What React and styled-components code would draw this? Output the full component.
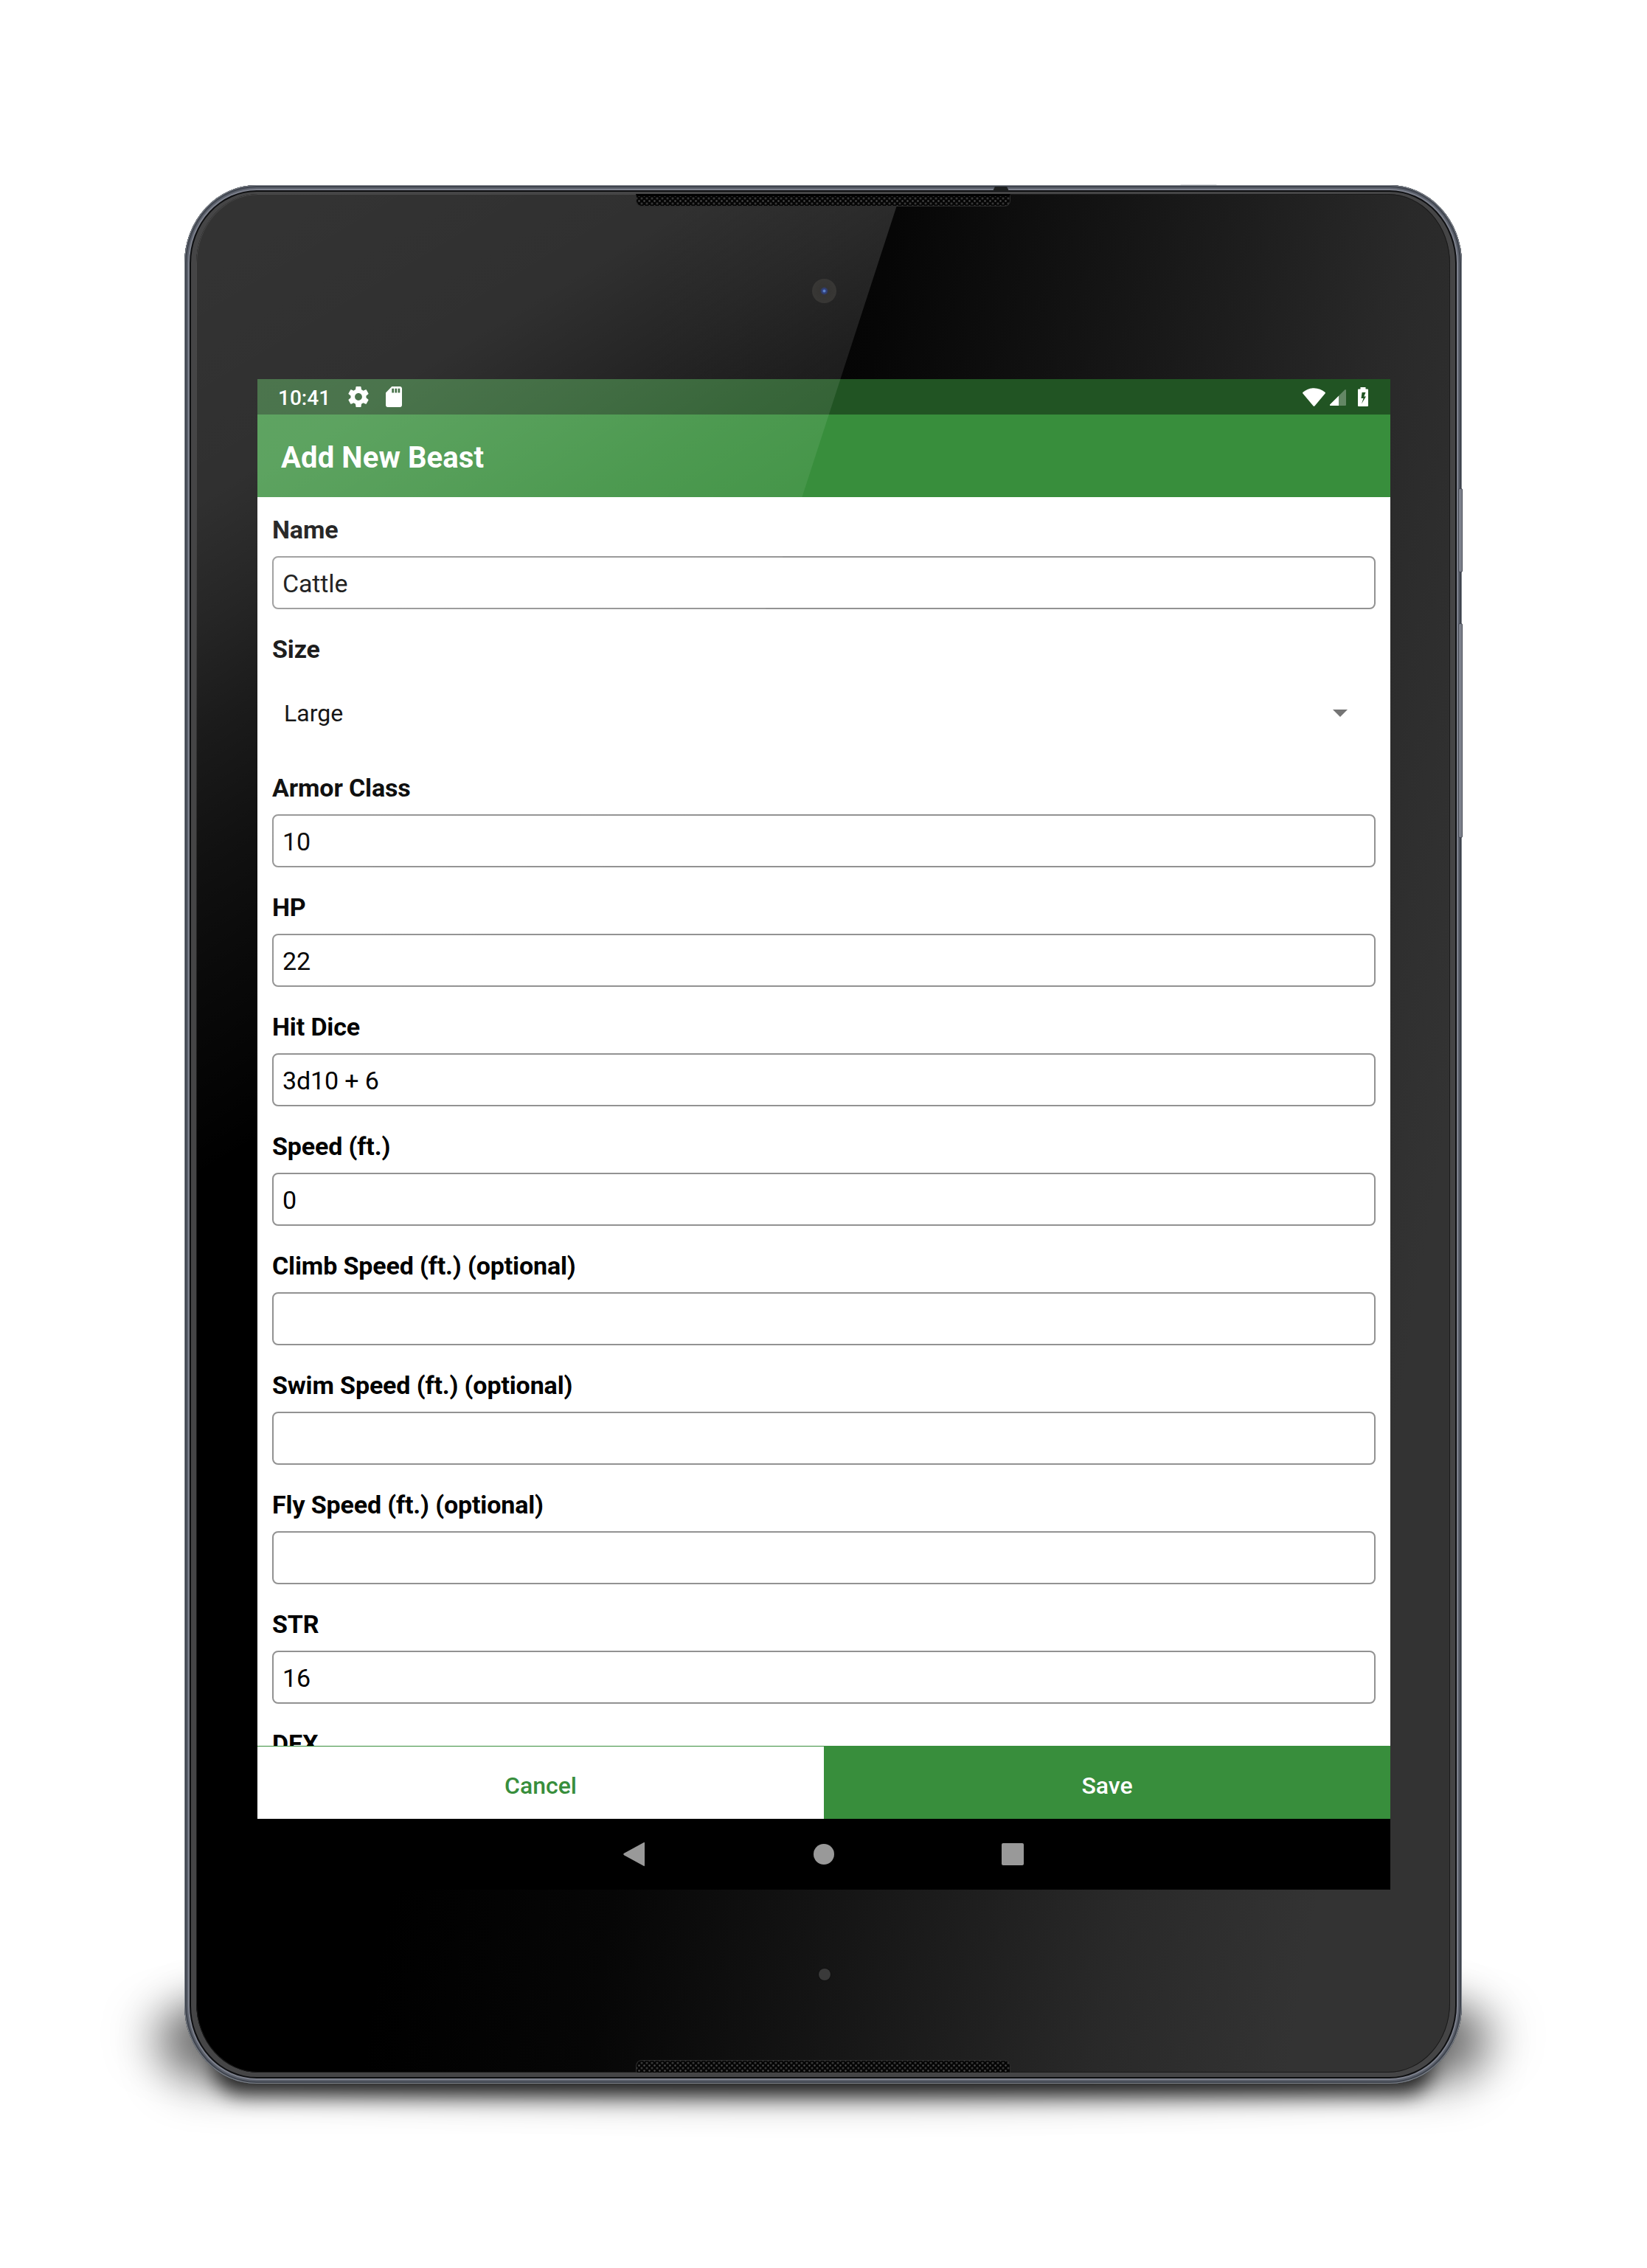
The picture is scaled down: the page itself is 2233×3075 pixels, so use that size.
import React from 'react';
import styled, { createGlobalStyle, css } from 'styled-components';

const GREEN = '#388e3c';

const GlobalStyle = createGlobalStyle`
  * { box-sizing: border-box; }
  body { margin: 0; background: #fff; font-family: Roboto, "Noto Sans", sans-serif; }
`;

const Page = styled.main`
  width: 2233px;
  height: 3075px;
  padding: 251px 250px 250px;
  overflow: hidden;
  background: #fff;
`;

const Device = styled.div`
  position: relative;
  width: 1732px;
  height: 2574px;
`;

const WideShadow = styled.div`
  position: absolute;
  left: -50px;
  right: -50px;
  top: 2445px;
  height: 125px;
  border-radius: 50%;
  background: rgba(0, 0, 0, 0.5);
  filter: blur(34px);
`;

const SideShadow = styled.div`
  position: absolute;
  left: -28px;
  right: -28px;
  top: 2465px;
  height: 110px;
  border-radius: 90px 90px 70px 70px;
  background: rgba(0, 0, 0, 0.42);
  filter: blur(30px);
`;

const ContactShadow = styled.div`
  position: absolute;
  left: 40px;
  right: 40px;
  top: 2512px;
  height: 77px;
  border-radius: 60px;
  background: rgba(0, 0, 0, 0.8);
  filter: blur(14px);
`;

const SideButton = styled.span`
  position: absolute;
  left: 1727px;
  top: ${(p) => p.$top}px;
  width: 6px;
  height: ${(p) => p.$height}px;
  border: 1px solid #464a54;
  border-radius: 2px;
  background: #7d818c;
`;

const TopKey = styled.span`
  position: absolute;
  left: 1350px;
  top: -1px;
  width: 50px;
  height: 3px;
  border-radius: 2px;
  background: #d5d7da;
`;

const Jack = styled.span`
  position: absolute;
  left: 1096px;
  top: 2px;
  width: 22px;
  height: 6px;
  background: #1d1f20;
  clip-path: polygon(3px 0, 19px 0, 22px 6px, 0 6px);
`;

const Rim = styled.div`
  position: relative;
  width: 100%;
  height: 100%;
  padding: 12px 16px 15px;
  border-radius: 98px / 106px;
  background: #454546;
  box-shadow:
    inset 0 0 0 1px #7f848b,
    inset 0 0 0 3px #3f444e,
    inset 0 0 0 5px #5b606b,
    inset 0 0 0 7px #7d818d,
    inset 0 0 0 9px #0e0f11;
`;

const Glass = styled.div`
  position: relative;
  display: flex;
  flex-direction: column;
  align-items: center;
  width: 1700px;
  height: 2547px;
  overflow: hidden;
  border-radius: 84px / 94px;
  background: linear-gradient(99.5deg, #000 640px, #060606 940px, #141414 1227px, #1e1e1e 1424px, #292929 1621px, #333 1880px);
  box-shadow: inset 0 0 0 1px #1b1b1b;
`;

const Glare = styled.div`
  position: absolute;
  inset: 0;
  pointer-events: none;
  clip-path: polygon(0 0, 955px 0, 127px 2547px, 0 2547px);
  background: linear-gradient(
    149deg,
    rgba(255, 255, 255, 0.2) 100px,
    rgba(255, 255, 255, 0.19) 360px,
    rgba(255, 255, 255, 0.15) 500px,
    rgba(255, 255, 255, 0.105) 630px,
    rgba(255, 255, 255, 0.067) 780px,
    rgba(255, 255, 255, 0.04) 916px,
    rgba(255, 255, 255, 0) 1148px
  );
`;

const Speaker = styled.div`
  position: relative;
  z-index: 1;
  flex: none;
  width: 508px;
  height: 17px;
  background-color: #050505;
  background-image: radial-gradient(circle at 50% 50%, #4a4a4a 0.8px, transparent 1.7px),
    radial-gradient(circle at 50% 50%, #4a4a4a 0.8px, transparent 1.7px);
  background-size: 7px 7px;
  background-position: 0 3px, 3.5px 6.5px;
  border: 1px solid #2c2c2c;
  ${(p) =>
    p.$end === 'top'
      ? css`border-top: 3px solid #000; border-radius: 0 0 8px 8px;`
      : css`border-bottom: 0; border-radius: 8px 8px 0 0;`}
`;

const Camera = styled.div`
  position: relative;
  z-index: 1;
  flex: none;
  width: 33px;
  height: 33px;
  margin: 98px 0 0 3px;
  border-radius: 50%;
  background: radial-gradient(circle, #5b83cc 0 1.2px, #303f78 2.5px 3.5px, #353432 5.5px, #3a3937 100%);
`;

const Mic = styled.div`
  flex: none;
  width: 16px;
  height: 16px;
  margin: 107px 0 108px 4px;
  border-radius: 50%;
  background: #3a3a3a;
  box-shadow: 0 0 0 1px #111;
`;

const Screen = styled.section`
  display: flex;
  flex-direction: column;
  flex: none;
  width: 1536px;
  height: 2048px;
  margin: 103px 0 0 2px;
  background: #fff;
  color: #000;
`;

const StatusBar = styled.div`
  display: flex;
  align-items: center;
  flex: none;
  height: 48px;
  padding: 0 30px 0 28px;
  background: #215423;
  color: #fff;
`;

const Clock = styled.span`
  width: 95px;
  padding-top: 3px;
  font-size: 28px;
  font-weight: 500;
  line-height: 32px;
`;

const StatusIcon = styled.svg`
  display: block;
  flex: none;
  width: ${(p) => p.$w}px;
  height: ${(p) => p.$h}px;
  margin-left: ${(p) => p.$gap || 0}px;
`;

const Spacer = styled.span`
  flex: 1;
`;

const AppBar = styled.header`
  display: flex;
  align-items: center;
  flex: none;
  height: 112px;
  padding: 5px 32px 0;
  background: ${GREEN};
  color: #fff;
  font-size: 40px;
  font-weight: 700;
  letter-spacing: 0.12px;
`;

const Form = styled.div`
  display: flex;
  flex-direction: column;
  flex: 1;
  min-height: 0;
  overflow: hidden;
  padding: 24px 20px 0;
`;

const Field = styled.div`
  flex: none;
  margin-bottom: 34px;
`;

const Label = styled.div`
  height: 40px;
  margin-bottom: 16px;
  font-size: 34px;
  font-weight: 700;
  line-height: 40px;
  letter-spacing: -0.14px;
  white-space: nowrap;
`;

const TextBox = styled.div`
  display: flex;
  align-items: center;
  height: 72px;
  padding: 1px 12px 0;
  border: 2px solid #929292;
  border-radius: 8px;
  font-size: 34px;
  letter-spacing: -0.14px;
`;

const Picker = styled.div`
  display: flex;
  align-items: center;
  justify-content: space-between;
  height: 98px;
  padding: 3px 38px 0 16px;
  font-size: 32px;
`;

const Caret = styled.span`
  border: solid transparent;
  border-width: 10px 10px 0;
  border-top-color: #757575;
`;

const Actions = styled.div`
  display: flex;
  flex: none;
  height: 99px;
`;

const ActionButton = styled.button`
  flex: 1;
  padding: 7px 0 0;
  border: 0;
  border-top: 1px solid ${GREEN};
  background: ${(p) => (p.$primary ? GREEN : '#fff')};
  color: ${(p) => (p.$primary ? '#fff' : GREEN)};
  font: 500 32px Roboto, sans-serif;
`;

const NavBar = styled.nav`
  display: flex;
  align-items: center;
  justify-content: center;
  gap: 224px;
  flex: none;
  height: 96px;
  background: #000;
`;

const NavIcon = styled.svg`
  display: block;
  width: 32px;
  height: 34px;
  fill: #999;
`;

const fields = [
  { label: 'Name', value: 'Cattle' },
  { label: 'Size', value: 'Large', picker: true },
  { label: 'Armor Class', value: '10' },
  { label: 'HP', value: '22' },
  { label: 'Hit Dice', value: '3d10 + 6' },
  { label: 'Speed (ft.)', value: '0' },
  { label: 'Climb Speed (ft.) (optional)', value: '' },
  { label: 'Swim Speed (ft.) (optional)', value: '' },
  { label: 'Fly Speed (ft.) (optional)', value: '' },
  { label: 'STR', value: '16' },
  { label: 'DEX', value: '' },
];

function Status() {
  return (
    <StatusBar>
      <Clock>10:41</Clock>
      <StatusIcon $w={28} $h={28} viewBox="2 2 20 20" fill="#fff">
        <path d="M19.43 12.98c.04-.32.07-.64.07-.98s-.03-.66-.07-.98l2.11-1.65c.19-.15.24-.42.12-.64l-2-3.46c-.12-.22-.39-.3-.61-.22l-2.49 1c-.52-.4-1.08-.73-1.69-.98l-.38-2.65C14.46 2.18 14.25 2 14 2h-4c-.25 0-.46.18-.49.42l-.38 2.65c-.61.25-1.17.59-1.69.98l-2.49-1c-.23-.09-.49 0-.61.22l-2 3.46c-.13.22-.07.49.12.64l2.11 1.65c-.04.32-.07.65-.07.98s.03.66.07.98l-2.11 1.65c-.19.15-.24.42-.12.64l2 3.46c.12.22.39.3.61.22l2.49-1c.52.4 1.08.73 1.69.98l.38 2.65c.03.24.24.42.49.42h4c.25 0 .46-.18.49-.42l.38-2.65c.61-.25 1.17-.59 1.69-.98l2.49 1c.23.09.49 0 .61-.22l2-3.46c.12-.22.07-.49-.12-.64l-2.11-1.65zM12 15.5c-1.93 0-3.5-1.57-3.5-3.5s1.57-3.5 3.5-3.5 3.5 1.57 3.5 3.5-1.57 3.5-3.5 3.5z" />
      </StatusIcon>
      <StatusIcon $w={22} $h={28} $gap={23} viewBox="4 2 16 20" preserveAspectRatio="none" fill="#fff">
        <path d="M18 2h-8L4.02 8 4 20c0 1.100.9 2 2 2h12c1.100 0 2-.9 2-2V4c0-1.100-.9-2-2-2zm-6 6h-2V4h2v4zm3 0h-2V4h2v4zm3 0h-2V4h2v4z" />
      </StatusIcon>
      <Spacer />
      <StatusIcon $w={31} $h={25} viewBox="0 0 31 25" fill="#fff">
        <path d="M.6 5.800C4.600 2.400 9.800.2 15.500.2s10.900 2.200 14.900 5.600c.6.500.7 1 .2 1.700L16.600 24.200q-1.100 1.100-2.200 0L.4 7.500C-.1 6.800 0 6.300.6 5.800z" />
      </StatusIcon>
      <StatusIcon $w={22} $h={24} $gap={6} viewBox="0 -2 22 24" fill="#fff">
        <path d="M22 1v20a1 1 0 0 1-1 1H1.200a1 1 0 0 1-.8-1.800L20.300.4A1 1 0 0 1 22 1z" opacity=".3" />
        <path d="M12 8.700V22H1.200a1 1 0 0 1-.8-1.800z" />
      </StatusIcon>
      <StatusIcon $w={14} $h={26} $gap={16} viewBox="0 0 14 26" fill="#fff" fillRule="evenodd">
        <path d="M3.500 0h7v2.600H13a1 1 0 0 1 1 1V25a1 1 0 0 1-1 1H1a1 1 0 0 1-1-1V3.600a1 1 0 0 1 1-1h2.500zM5.600 7 4.500 15h3L5 22.500 11 12.500H8.300L10.500 7z" />
      </StatusIcon>
    </StatusBar>
  );
}

export default function App() {
  return (
    <Page>
      <GlobalStyle />
      <Device>
        <WideShadow />
        <SideShadow />
        <ContactShadow />
        <TopKey />
        <Rim>
          <Glass>
            <Speaker $end="top" />
            <Camera />
            <Screen>
              <Status />
              <AppBar>Add New Beast</AppBar>
              <Form>
                {fields.map((f) => (
                  <Field key={f.label}>
                    <Label>{f.label}</Label>
                    {f.picker ? (
                      <Picker>
                        {f.value}
                        <Caret />
                      </Picker>
                    ) : (
                      <TextBox>{f.value}</TextBox>
                    )}
                  </Field>
                ))}
              </Form>
              <Actions>
                <ActionButton>Cancel</ActionButton>
                <ActionButton $primary>Save</ActionButton>
              </Actions>
              <NavBar>
                <NavIcon viewBox="2 0 32 34">
                  <path d="M29.500 1.200Q31 .2 31 2V32q0 1.800-1.500.8L3 18.200Q1.500 17 3 15.800z" />
                </NavIcon>
                <NavIcon viewBox="0 0 32 34">
                  <circle cx="16" cy="17" r="14" />
                </NavIcon>
                <NavIcon viewBox="0 0 32 34">
                  <rect x="1" y="2" width="30" height="30" rx="2" />
                </NavIcon>
              </NavBar>
            </Screen>
            <Mic />
            <Speaker $end="bottom" />
            <Glare />
          </Glass>
        </Rim>
        <Jack />
        <SideButton $top={411} $height={114} />
        <SideButton $top={594} $height={291} />
      </Device>
    </Page>
  );
}
